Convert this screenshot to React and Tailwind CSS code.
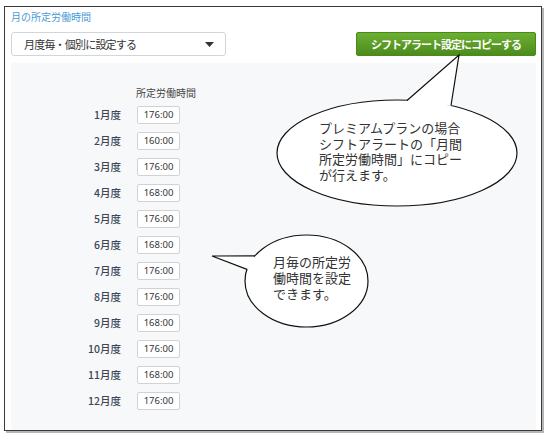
import React from 'react';

const months = [
  ['1月度', '176:00'],
  ['2月度', '160:00'],
  ['3月度', '176:00'],
  ['4月度', '168:00'],
  ['5月度', '176:00'],
  ['6月度', '168:00'],
  ['7月度', '176:00'],
  ['8月度', '176:00'],
  ['9月度', '168:00'],
  ['10月度', '176:00'],
  ['11月度', '168:00'],
  ['12月度', '176:00'],
];

const jp = { fontFamily: '"Noto Sans CJK JP", "Noto Sans", sans-serif' };

// speech bubble callouts drawn over the form
const Callouts = () => (
  <div className="absolute inset-0 pointer-events-none">
    <svg width="551" height="439" className="absolute left-0 top-0">
      <ellipse cx="397" cy="153" rx="120" ry="53" fill="#fff" stroke="#111" strokeWidth="1.2" />
      <polygon points="407,101 459,55 451,106" fill="#fff" />
      <polyline points="407,100.5 459,55 451,105.5" fill="none" stroke="#111" strokeWidth="1.2" />

      <ellipse cx="306.5" cy="281" rx="61.5" ry="46" fill="#fff" stroke="#111" strokeWidth="1.2" />
      <polygon points="255.5,256.5 212,256 247.5,269.5" fill="#fff" />
      <polyline points="255,255.8 212,256 247,269.4" fill="none" stroke="#111" strokeWidth="1.2" />
    </svg>

    <p className="absolute left-[319px] top-[120px] text-[13px] leading-[15.5px] text-[#333] whitespace-nowrap" style={jp}>
      プレミアムプランの場合<br />
      シフトアラートの「月間<br />
      所定労働時間」にコピー<br />
      が行えます。
    </p>

    <p className="absolute left-[273px] top-[254px] text-[13px] leading-[16px] text-[#333] whitespace-nowrap" style={jp}>
      月毎の所定労<br />
      働時間を設定<br />
      できます。
    </p>
  </div>
);

const App = () => {
  return (
    <div className="relative w-[551px] h-[439px] bg-white pt-[6px] pl-[4px]" style={jp}>
      <div className="w-[538px] h-[425px] border border-[#3a3a3a] shadow-[2px_2px_0_#b5b5b5] pl-[6px] pr-[5px] flex flex-col">
        {/* Title */}
        <div className="pt-[3px] h-[25px] text-[10px] leading-[14px] text-[#4a9ad6]">月の所定労働時間</div>

        {/* Select + copy button */}
        <div className="flex items-center justify-between h-[24px]">
          <div className="w-[215px] h-[24px] border border-[#cfd6dd] rounded-[3px] bg-white flex items-center justify-between pl-[12px] pr-[11px]">
            <span className="text-[11px] tracking-[-0.8px] text-[#333]">月度毎・個別に設定する</span>
            <svg width="9" height="5" viewBox="0 0 9 5">
              <path d="M0 0 L9 0 L4.5 5 Z" fill="#333" />
            </svg>
          </div>
          <button className="w-[180px] h-[24px] rounded-[2px] bg-gradient-to-b from-[#6cb032] to-[#4c8b1c] border border-[#4a8a1d] text-white text-[11px] font-bold tracking-[-1px] flex items-center justify-center">
            シフトアラート設定にコピーする
          </button>
        </div>

        {/* Monthly hours panel */}
        <div className="mt-[7px] flex-1 bg-[#f7f8fa] pt-[23px]">
          <div className="ml-[125px] text-[10px] leading-[14px] text-[#444] mb-[6px]">所定労働時間</div>
          <div className="flex flex-col gap-[8px]">
            {months.map(([label, value]) => (
              <div key={label} className="flex items-center h-[18px]">
                <span className="w-[110px] text-right text-[10.5px] font-medium text-[#3c4656]">{label}</span>
                <span
                  className="ml-[16px] w-[43px] h-[18px] border border-[#cfd3d8] rounded-[2px] bg-white flex items-center justify-center text-[9.5px] text-[#333]"
                  style={{ fontFamily: '"Noto Sans", sans-serif' }}
                >
                  {value}
                </span>
              </div>
            ))}
          </div>
        </div>
      </div>

      <Callouts />
    </div>
  );
};

export default App;
